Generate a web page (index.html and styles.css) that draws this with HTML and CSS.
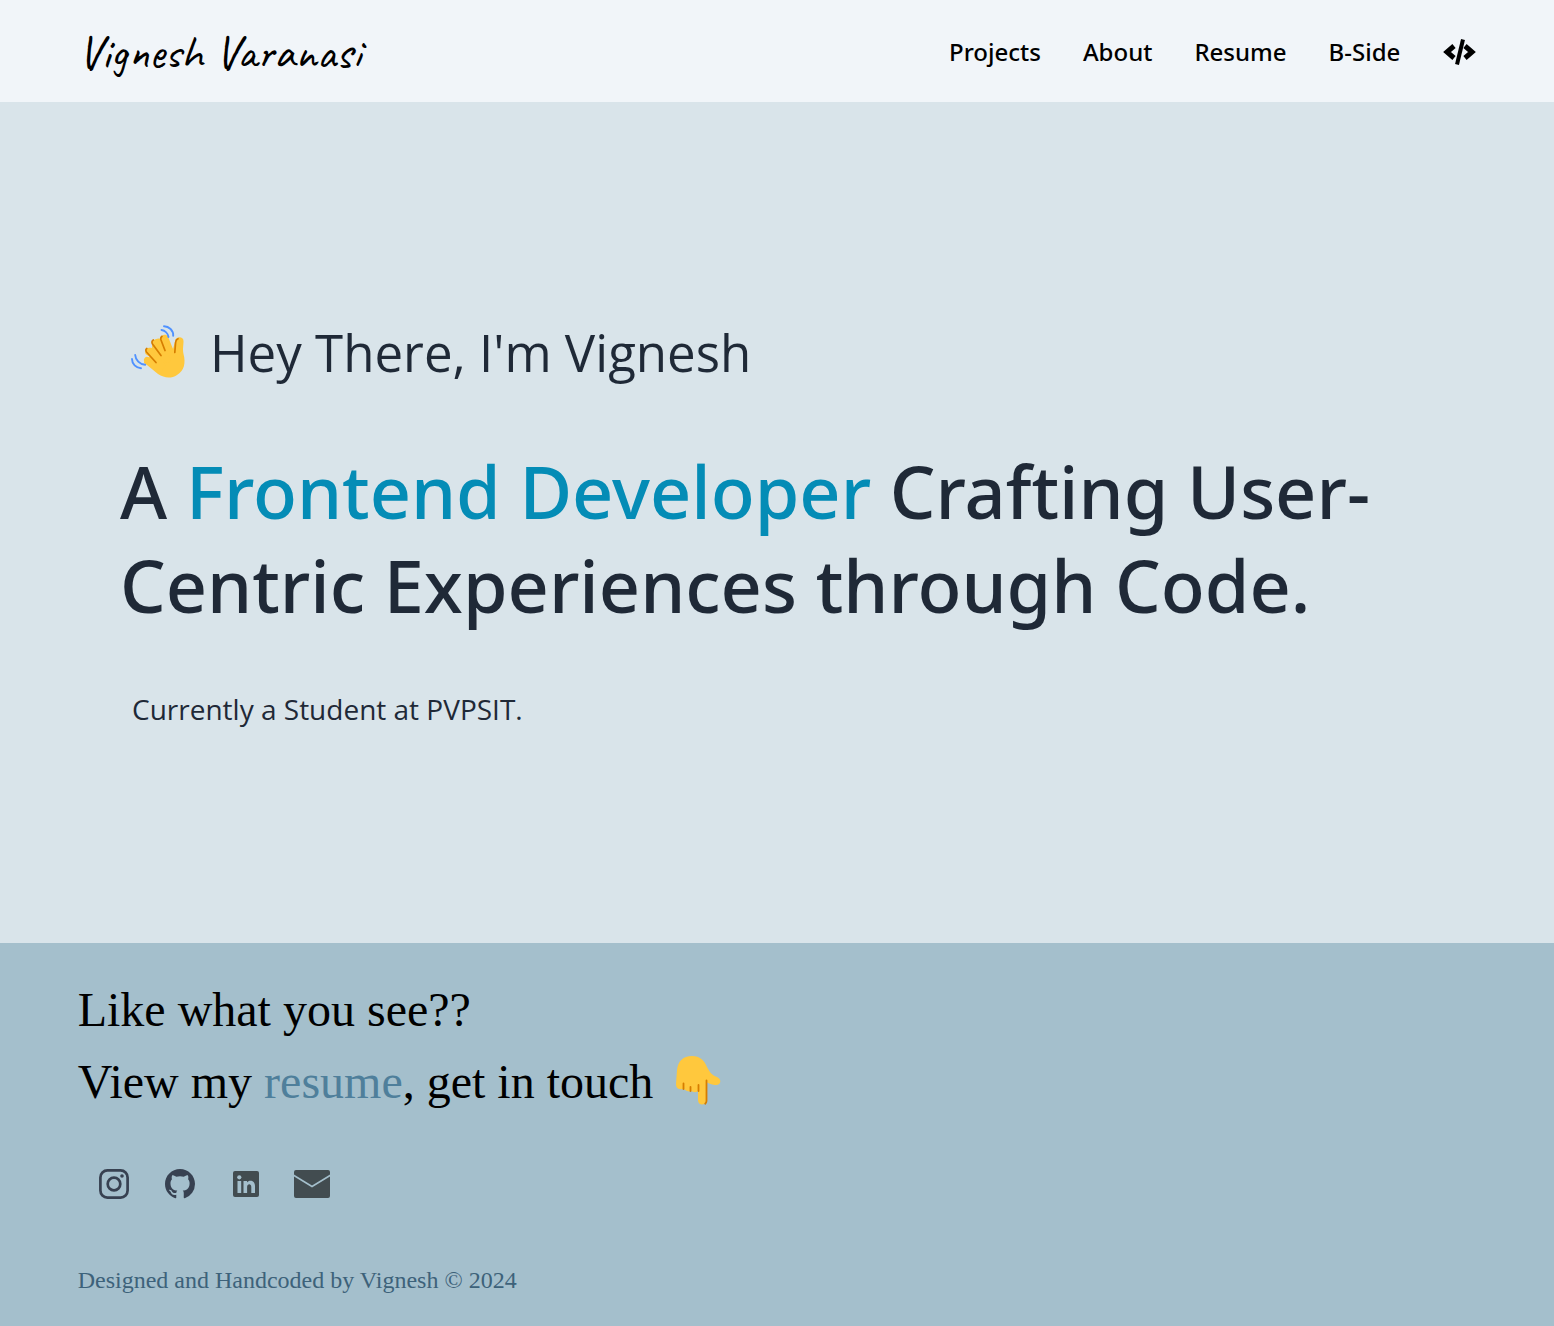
FILE: index.html
```html
<!DOCTYPE html>
<html lang="en">
<head>
  <meta charset="utf-8">
  <meta name="viewport" content="width=device-width, initial-scale=1">
  <title>Vignesh Varanasi</title>
  <link rel="stylesheet" href="styles.css">
</head>
<body>
  <header class="site-header">
    <a class="logo" href="#">Vignesh Varanasi</a>
    <nav class="nav" aria-label="Main">
      <a href="#projects">Projects</a>
      <a href="#about">About</a>
      <a href="#resume">Resume</a>
      <a href="#b-side">B-Side</a>
      <a class="nav-code" href="#code" aria-label="Source code">
        <svg viewBox="0 0 34 28" width="34" height="28" fill="none" stroke="currentColor" stroke-width="5">
          <path d="M12 8 5 14l7 6M23 8l7 6-7 6"/>
          <path d="M21 1.500 15 26.500" stroke-width="4"/>
        </svg>
      </a>
    </nav>
  </header>

  <main class="hero">
    <p class="greeting">
      <svg class="wave" viewBox="0 0 56 56" width="56" height="56" aria-hidden="true">
        <path fill="#ffc83d" d="M14 39C14 36 16 33 20 33L15.500 30C14 25 18 23 22 24C22 20 22 17 25 15.500C28 14 30 14 31 15.500C30 11 36 9 38 12.500L43 25L45 17.500C45.500 12 53.500 12 53.500 17C53.500 22 52.500 24 53.500 30C56 39 54 47 47 51C41 55 34 54 28 50L17 41Z"/>
        <path fill="none" stroke="#ffc83d" stroke-width="6" stroke-linecap="round" d="M17 36l12 10M20 27.500l12 14M25.500 19l12 17M34 15.500l8 15"/>
        <g fill="none" stroke="#d67d00" stroke-width="1.700" stroke-linecap="round">
          <path d="M26 38.500 16.500 28c-1-1.500-.8-2.800.3-3.500M31 31.500 22.500 20c-1-1.700-.6-3.200.8-4M35 26.500 31 16c-.5-1.500-.2-2.800 1-3.700M44.800 28.500l.8-10c.2-2 .8-3.200 2.400-3.800"/>
        </g>
        <g fill="none" stroke="#5092ff" stroke-width="1.900" stroke-linecap="round">
          <path d="M34 2.200c5 0 9.500 4.300 9.200 9.500M31.500 6c3.500.5 6.500 3.500 7 7M5.200 31c.3 5 4.500 9.500 10 9.800M2 35c0 5 4 9 9 9.200"/>
        </g>
      </svg>
      <span>Hey There, I'm Vignesh</span>
    </p>
    <h1 class="headline">A <span class="accent">Frontend Developer</span> Crafting User-Centric Experiences through Code.</h1>
    <p class="status">Currently a Student at PVPSIT.</p>
  </main>

  <footer class="site-footer">
    <p class="pitch">Like what you see??</p>
    <p class="pitch">View my <a href="#resume">resume</a>, get in touch
      <svg class="point" viewBox="0 0 48 52" width="48" height="52" aria-hidden="true">
        <path fill="#ffc83d" d="M4 16C5 7 10 2 19 2c8 0 12 4 15 11 3 6 5 8 10 10 6 3 3 9-2 8-4-.3-7-2-9-3v18c0 6-8 6-8 0V37c-2 2-5 1-7 0-2 1-5 0-7-2-4 1-8 0-8-5Z"/>
        <path fill="none" stroke="#d67d00" stroke-width="1.800" stroke-linecap="round" d="M10.500 29.500v5.500M17.500 33v4M25.500 31v6M33.500 26.500V47c0 1.300-.5 2-1.300 2.700"/>
      </svg>
    </p>
    <div class="social">
      <a href="#instagram" aria-label="Instagram">
        <svg viewBox="0 0 30 30" width="30" height="30" fill="none" stroke="currentColor" stroke-width="2.700">
          <rect x="1.400" y="1.400" width="27.200" height="27.200" rx="7"/>
          <circle cx="15" cy="15" r="6.300"/>
          <circle cx="23" cy="7" r="1.800" fill="currentColor" stroke="none"/>
        </svg>
      </a>
      <a href="#github" aria-label="GitHub">
        <svg viewBox="0 0 16 16" width="30" height="30" fill="currentColor">
          <path d="M8 0C3.580 0 0 3.580 0 8c0 3.540 2.290 6.530 5.470 7.590.4.070.55-.17.55-.38 0-.19-.01-.82-.01-1.490-2.010.37-2.530-.49-2.690-.94-.09-.23-.48-.94-.82-1.130-.28-.15-.68-.52-.01-.53.63-.01 1.080.58 1.230.82.72 1.210 1.870.87 2.330.66.070-.52.28-.87.51-1.070-1.780-.2-3.640-.89-3.640-3.950 0-.87.31-1.590.82-2.150-.08-.2-.36-1.020.08-2.120 0 0 .67-.21 2.200.82.64-.18 1.320-.27 2-.27s1.360.09 2 .27c1.530-1.040 2.200-.82 2.200-.82.44 1.100.16 1.920.08 2.120.51.56.82 1.270.82 2.150 0 3.070-1.870 3.750-3.650 3.950.29.25.54.73.54 1.480 0 1.070-.01 1.930-.01 2.200 0 .21.15.46.55.38A8.010 8.010 0 0 0 16 8c0-4.420-3.580-8-8-8Z"/>
        </svg>
      </a>
      <a class="slate" href="#linkedin" aria-label="LinkedIn">
        <svg viewBox="0 0 26 26" width="26" height="26">
          <rect width="26" height="26" rx="2" fill="currentColor"/>
          <g fill="#a4bfcc"><circle cx="6.300" cy="6.300" r="2.100"/><path d="M4.500 10h3.700v12H4.500zM10.500 10H14v1.600c1.800-3 8-2.700 8 3.400v7h-3.700v-6c0-3.800-4.200-3.500-4.200 0v6h-3.600z"/></g>
        </svg>
      </a>
      <a class="slate" href="#email" aria-label="Email">
        <svg viewBox="0 0 36 28" width="36" height="28">
          <path fill="currentColor" d="M2 0h32a2 2 0 0 1 2 2v2.500L18 15.500 0 4.500V2a2 2 0 0 1 2-2ZM0 6.500l18 11 18-11V26a2 2 0 0 1-2 2H2a2 2 0 0 1-2-2Z"/>
        </svg>
      </a>
    </div>
    <p class="credit">Designed and Handcoded by Vignesh © 2024</p>
  </footer>
</body>
</html>
```
FILE: styles.css
```css
* {
  box-sizing: border-box;
}

body {
  margin: 0;
  min-height: 100vh;
  display: flex;
  flex-direction: column;
  background: #d9e4ea;
  color: #000;
  font-family: "Liberation Serif", "Times New Roman", serif;
}

p,
h1 {
  margin: 0;
}

a {
  color: inherit;
  text-decoration: none;
}

svg {
  display: block;
}

.site-header {
  display: flex;
  flex-wrap: wrap;
  align-items: center;
  justify-content: space-between;
  gap: 16px;
  padding: 25px 5% 23px;
  background: #f1f5f9;
  font-family: "Segoe UI", "Noto Sans", sans-serif;
}

.logo {
  font-family: Caveat, cursive;
  font-size: 48px;
  line-height: 54px;
}

.nav {
  display: flex;
  flex-wrap: wrap;
  align-items: center;
  gap: 42px;
  font-size: 24px;
  font-weight: 500;
  line-height: 36px;
}

.hero {
  flex: 1;
  display: flex;
  flex-direction: column;
  justify-content: center;
  padding: 48px 120px;
  color: #1f2937;
  font-family: "Segoe UI", "Open Sans", sans-serif;
}

.greeting {
  display: flex;
  align-items: center;
  gap: 24px;
  padding-left: 10px;
  font-size: 51px;
  line-height: 72px;
}

.wave {
  flex: none;
}

.headline {
  margin: 56px 0;
  font-family: "Segoe UI", "Noto Sans", sans-serif;
  font-size: 72px;
  font-weight: 500;
  line-height: 94px;
}

.accent {
  color: #048cb6;
}

.status {
  padding-left: 12px;
  font-size: 28px;
  line-height: 42px;
}

.site-footer {
  padding: 31px 5% 28px;
  background: #a4bfcc;
}

.pitch {
  font-size: 48px;
  line-height: 72px;
}

.pitch a {
  color: #4f7f9b;
}

.point {
  display: inline-block;
  margin-left: 8px;
  vertical-align: -8px;
}

.social {
  display: flex;
  align-items: center;
  gap: 30px;
  margin: 51px 0 63px;
  padding-left: 18px;
  color: #374151;
}

.social a {
  width: 36px;
  display: flex;
  justify-content: center;
}

.social .slate {
  color: #424c50;
}

.credit {
  color: #3d627a;
  font-size: 24px;
  line-height: 36px;
}
```
